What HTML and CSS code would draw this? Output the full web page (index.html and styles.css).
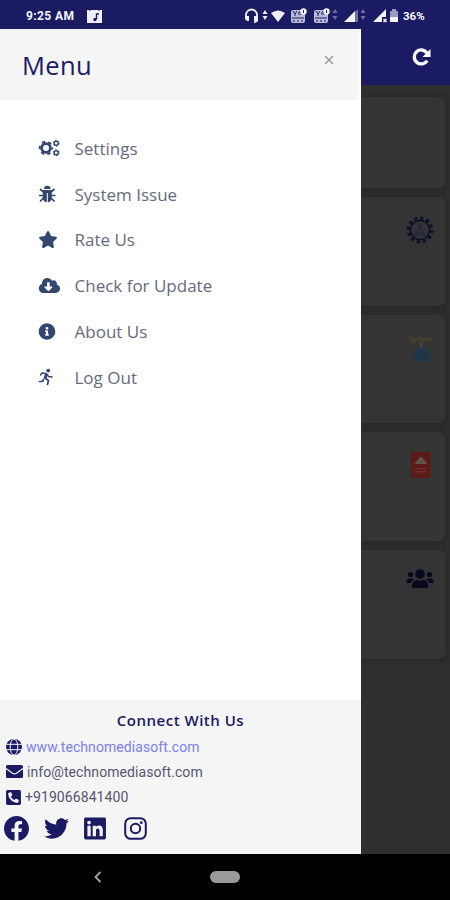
FILE: index.html
```html
<!DOCTYPE html>
<html lang="en">
<head>
    <meta charset="UTF-8">
    <meta name="viewport" content="width=device-width, initial-scale=1.0">
    <title>Menu</title>
    <link rel="stylesheet" href="styles.css">
</head>
<body>
    <div class="phone">
        <div class="status-bar">
            <span class="time">9:25 AM</span>
            <svg class="note" width="15" height="14" viewBox="0 0 15 14"><path fill="#eeeef8" d="M0 1h2l1 1 1-1h7l1 1 1-1h2v13H0z"/><path fill="none" stroke="#1a1b62" stroke-width="1.4" d="M12 5H9.500v5"/><circle cx="8" cy="10.500" r="1.700" fill="#1a1b62"/></svg>
            <svg class="status-icons" width="156" height="18" viewBox="244 6 156 18">
                <path fill="none" stroke="#f0f0fa" stroke-width="1.800" d="M246 17v-3a5.500 5.500 0 0 1 11 0v6l-3 1.500"/>
                <path fill="#f0f0fa" d="M245 15h4v5h-2l-2-2zM254 15h4v4l-1 1h-3zM265 9l2.500 4h-5zM265 19l2.500-4h-5zM271 12q7-5 14 0l-7 9z"/>
                <g fill="#b9b9da"><rect x="291" y="9" width="14" height="13" rx="2"/><rect x="314" y="9" width="14" height="13" rx="2"/></g>
                <g fill="none" stroke="#1a1b62" stroke-width="1"><path d="M293 10l2 3 2-3M295 13v2M299 14v-3h2v3M292 17h12M294 19v2M298 19v2M302 19v2M316 10l2 3 2-3M318 13v2M322 14v-3h2v3M315 17h12M317 19v2M321 19v2M325 19v2"/></g>
                <g fill="#f5f5fc"><circle cx="303.500" cy="10.500" r="3.200"/><circle cx="326.500" cy="10.500" r="3.200"/></g>
                <path stroke="#1a1b62" d="M303.500 9v3M326.500 9v3"/>
                <path fill="#6e6fa6" d="M335 8l2.500 4h-5zM335 19l2.500-4h-5zM363 8l2.500 4h-5zM363 19l2.500-4h-5zM355 11l3-3v13h-3z"/>
                <path fill="#f5f5fc" d="M344 21l11-11v11zM373 21l13-13v8h-4v5z"/>
                <path stroke="#f5f5fc" stroke-width="1.500" d="M383.500 18l3 3M386.500 18l-3 3"/>
                <path fill="#9899c4" d="M392 8h4v2h2v6h-8v-6h2z"/><path fill="#f5f5fc" d="M390 16h8v5h-8z"/>
            </svg>
            <span class="battery">36%</span>
        </div>

        <div class="screen">
            <div class="page">
                <div class="app-bar">
                    <svg width="20" height="20" viewBox="0 0 20 20"><path fill="none" stroke="#fff" stroke-width="3.300" d="M15.200 13.600A7 7 0 1 1 15 6"/><path fill="#fff" d="M18.500 2v8h-8z"/></svg>
                </div>
                <div class="cards">
                    <div class="card card-first"></div>
                    <div class="card">
                        <svg width="28" height="28" viewBox="0 0 28 28"><circle cx="14" cy="14" r="11.800" fill="none" stroke="#0b0f2c" stroke-width="3.200" stroke-dasharray="3.090 3.090"/><circle cx="14" cy="14" r="9.600" fill="none" stroke="#0b0f2c" stroke-width="1.500"/><path fill="none" stroke="#242736" stroke-width="1.300" d="M9 19l5-8 5 8zM11 17h6"/><circle cx="14" cy="10" r="2" fill="none" stroke="#242736" stroke-width="1.200"/></svg>
                    </div>
                    <div class="card">
                        <svg width="28" height="28" viewBox="0 0 28 28"><path fill="#453e2f" d="M2 3l8 1 5-2 3 2 7-1 2 4-6-1-3 3-2-2-2 3-2-3-6 3z"/><path fill="#514739" d="M14 8h2v6h-2z"/><path fill="#203549" d="M6 27l3-8q2-5 6.500-6 4.500 1 6.500 6l4 8z"/></svg>
                    </div>
                    <div class="card">
                        <svg width="28" height="28" viewBox="0 0 28 28"><path fill="#5c1a16" d="M5 1h19.500v26H5z"/><path fill="#62534f" d="M8.500 13l3-4 3-3.500 3 2.500 4 5z"/><path fill="#6a312c" d="M9 17h11v1.500H9zM9 20h12v1.500H9z"/></svg>
                    </div>
                    <div class="card card-users">
                        <svg width="28" height="28" viewBox="0 0 28 28"><g fill="#07081e"><circle cx="14" cy="9" r="4.800"/><circle cx="4.500" cy="9.500" r="2.600"/><circle cx="23.500" cy="9.500" r="2.600"/><path d="M6 23v-2c0-4 3-6 5-6q3 1.500 6 0c3 0 5 2 5 6v2zM.5 18c0-3 1-4.500 3-4.500h3l1 1q-2 1.500-2.500 3.500zM27.500 18c0-3-1-4.500-3-4.500h-3l-1 1q2 1.500 2.500 3.500z"/></g></svg>
                    </div>
                </div>
            </div>

            <div class="drawer">
                <div class="drawer-header">
                    <h1>Menu</h1>
                    <svg class="close" width="10" height="10" viewBox="0 0 10 10"><path stroke="#999" stroke-width="1.500" d="M1 1l8 8M9 1L1 9"/></svg>
                </div>
                <ul class="menu">
                    <li>
                        <svg width="22" height="18" viewBox="0 0 22 18"><g fill="none"><circle cx="8" cy="9" r="4.400" stroke-width="2.800"/><circle cx="8" cy="9" r="6.300" stroke-width="1.900" stroke-dasharray="3.200 3.400" stroke-dashoffset="1.600"/><circle cx="18.200" cy="4.200" r="2" stroke-width="1.400"/><circle cx="18.200" cy="4.200" r="3" stroke-width="1" stroke-dasharray="1.600 1.540"/><circle cx="18.200" cy="13.800" r="2" stroke-width="1.400"/><circle cx="18.200" cy="13.800" r="3" stroke-width="1" stroke-dasharray="1.600 1.540"/></g></svg>
                        <span>Settings</span>
                    </li>
                    <li>
                        <svg width="18" height="18" viewBox="0 0 18 18"><path stroke="none" d="M6 4a3.300 3.300 0 0 1 6.600 0zM4.800 5h9v8q-.5 4-4 4.300V8h-1v9.300q-3.500-.3-4-4.300z"/><path fill="none" stroke-width="1.700" d="M2 4l3.500 3M16.500 4L13 7M1 10.500h4M17.500 10.500h-4M2 16.500L5.500 13M16.500 16.500L13 13"/></svg>
                        <span>System Issue</span>
                    </li>
                    <li>
                        <svg width="20" height="17" viewBox="0 0 576 512"><path stroke="none" d="M259.300 17.800L194 150.200 47.900 171.500c-26.200 3.800-36.700 36.100-17.700 54.600l105.700 103-25 145.500c-4.500 26.300 23.200 46 46.400 33.700L288 439.600l130.700 68.700c23.200 12.200 50.900-7.400 46.400-33.700l-25-145.500 105.700-103c19-18.500 8.500-50.800-17.700-54.600L382 150.200 316.700 17.800c-11.700-23.600-45.600-23.900-57.400 0z"/></svg>
                        <span>Rate Us</span>
                    </li>
                    <li>
                        <svg width="22" height="17" viewBox="-14 0 640 512"><path stroke="none" d="M537.600 226.600c4.100-10.700 6.400-22.400 6.400-34.600 0-53-43-96-96-96-19.700 0-38.100 6-53.300 16.200C367 64.200 315.300 32 256 32c-88.400 0-160 71.600-160 160 0 2.700.1 5.400.2 8.100C40.200 219.800 0 273.200 0 336c0 79.500 64.500 144 144 144h368c70.700 0 128-57.300 128-128 0-61.900-44-113.600-102.400-125.400zm-132.900 88.700L299.300 420.700c-6.200 6.200-16.400 6.200-22.600 0L171.300 315.300c-10.100-10.100-2.900-27.300 11.300-27.300H248V176c0-8.800 7.200-16 16-16h48c8.800 0 16 7.200 16 16v112h65.400c14.200 0 21.400 17.200 11.300 27.300z"/></svg>
                        <span>Check for Update</span>
                    </li>
                    <li>
                        <svg width="18" height="17" viewBox="0 0 512 512"><path stroke="none" d="M256 8C119 8 8 119 8 256s111 248 248 248 248-111 248-248S393 8 256 8zm0 110c23.200 0 42 18.800 42 42s-18.800 42-42 42-42-18.800-42-42 18.800-42 42-42zm56 254c0 6.600-5.400 12-12 12h-88c-6.600 0-12-5.400-12-12v-24c0-6.600 5.400-12 12-12h12v-64h-12c-6.600 0-12-5.400-12-12v-24c0-6.600 5.400-12 12-12h64c6.600 0 12 5.400 12 12v100h12c6.600 0 12 5.400 12 12v24z"/></svg>
                        <span>About Us</span>
                    </li>
                    <li>
                        <svg width="16" height="18" viewBox="0 0 16 18"><circle cx="10.200" cy="2.600" r="1.900" stroke="none"/><path fill="none" stroke-width="1.500" stroke-linejoin="round" stroke-linecap="round" d="M2.500 7l1.500-2 4 .5 2.500 3L14 9"/><path fill="none" stroke-width="2.800" d="M8.500 5.500l-1.500 5"/><path fill="none" stroke-width="1.700" stroke-linecap="round" stroke-linejoin="round" d="M7 10l3.500 2.500-1 4M5.500 11.500L4.500 13.500H1.500"/></svg>
                        <span>Log Out</span>
                    </li>
                </ul>

                <div class="connect">
                    <h2>Connect With Us</h2>
                    <div class="contact">
                        <svg width="16" height="16" viewBox="0 0 16 16"><circle cx="8" cy="8" r="8"/><g fill="none" stroke="#f5f5f5" stroke-width="1"><ellipse cx="8" cy="8" rx="3.800" ry="8"/><path d="M0 5.300h16M0 10.700h16"/></g></svg>
                        <a class="link">www.technomediasoft.com</a>
                    </div>
                    <div class="contact">
                        <svg width="17" height="16" viewBox="0 0 17 16"><rect y="1" width="17" height="13" rx="1.500"/><path fill="none" stroke="#f5f5f5" stroke-width="1.300" d="M0 4.500l6.500 4.700q2 1.200 4 0L17 4.500"/></svg>
                        <span>info@technomediasoft.com</span>
                    </div>
                    <div class="contact">
                        <svg width="15" height="17" viewBox="0 0 448 512"><path d="M48 32h352a48 48 0 0 1 48 48v352a48 48 0 0 1-48 48H48a48 48 0 0 1-48-48V80a48 48 0 0 1 48-48z"/><path fill="#f5f5f5" d="M354 416c7 0 13-4.900 14.600-11.600l15-65a15 15 0 0 0-8.700-17.200l-70-30a15 15 0 0 0-17.500 4.300l-31 37.900c-48.900-23-88.300-62.900-110.800-110.800l37.900-31a15 15 0 0 0 4.300-17.500l-30-70a15 15 0 0 0-17.200-8.700l-65 15A15 15 0 0 0 64 126c0 160.300 129.900 290 290 290z"/></svg>
                        <span>+919066841400</span>
                    </div>
                    <div class="social">
                        <svg width="25" height="25" viewBox="8 8 496 496"><path d="M504 256C504 119 393 8 256 8S8 119 8 256c0 123.780 90.690 226.380 209.250 245V327.690h-63V256h63v-54.640c0-62.150 37-96.480 93.670-96.480 27.140 0 55.520 4.840 55.520 4.840v61h-31.280c-30.800 0-40.410 19.120-40.410 38.730V256h68.780l-11 71.690h-57.780V501C413.310 482.380 504 379.780 504 256z"/></svg>
                        <svg width="25" height="25" viewBox="0 0 512 512"><path d="M459.370 151.716c.325 4.548.325 9.097.325 13.645 0 138.720-105.583 298.558-298.558 298.558-59.452 0-114.680-17.219-161.137-47.106 8.447.974 16.568 1.299 25.340 1.299 49.055 0 94.213-16.568 130.274-44.832-46.132-.975-84.792-31.188-98.112-72.772 6.498.974 12.995 1.624 19.818 1.624 9.421 0 18.843-1.300 27.614-3.573-48.081-9.747-84.143-51.980-84.143-102.985v-1.299c13.969 7.797 30.214 12.670 47.431 13.319-28.264-18.843-46.781-51.005-46.781-87.391 0-19.492 5.197-37.360 14.294-52.954 51.655 63.675 129.300 105.258 216.365 109.807-1.624-7.797-2.599-15.918-2.599-24.040 0-57.828 46.782-104.934 104.934-104.934 30.213 0 57.502 12.670 76.670 33.137 23.715-4.548 46.456-13.320 66.599-25.340-7.798 24.366-24.366 44.833-46.132 57.827 21.117-2.273 41.584-8.122 60.426-16.243-14.292 20.791-32.161 39.308-52.628 54.253z"/></svg>
                        <svg width="22" height="25" viewBox="0 0 448 512"><path d="M416 32H31.900C14.300 32 0 46.500 0 64.300v383.400C0 465.500 14.300 480 31.900 480H416c17.600 0 32-14.500 32-32.300V64.300c0-17.800-14.400-32.300-32-32.300zM135.400 416H69V202.200h66.500V416zm-33.200-243c-21.300 0-38.500-17.300-38.500-38.500S80.900 96 102.200 96c21.200 0 38.500 17.300 38.500 38.500 0 21.300-17.200 38.500-38.500 38.500zm282.100 243h-66.400V312c0-24.800-.5-56.700-34.500-56.700-34.600 0-39.900 27-39.900 54.900V416h-66.400V202.200h63.700v29.200h.9c8.900-16.800 30.600-34.500 62.900-34.500 67.200 0 79.700 44.300 79.700 101.900V416z"/></svg>
                        <svg class="instagram" width="23" height="25" viewBox="0 0 23 25"><g fill="none" stroke="#1a1b62" stroke-width="2"><rect x="1.200" y="2.200" width="20.600" height="20.600" rx="5.500"/><circle cx="11.500" cy="12.500" r="4.700"/></g><circle cx="17.300" cy="6.700" r="1.400"/></svg>
                    </div>
                </div>
            </div>
        </div>

        <div class="nav-bar">
            <svg width="8" height="12" viewBox="0 0 8 12"><path fill="none" stroke="#a8a8a8" stroke-width="1.800" d="M6.500 1L1.500 6l5 5"/></svg>
            <div class="home-pill"></div>
        </div>
    </div>
</body>
</html>
```
FILE: styles.css
```css
:root {
    --navy: #1a1b62;
    --panel: #f5f5f5;
    --page: #2f2f2f;
    --card: #343435;
    --icon: #34466f;
}

* {
    box-sizing: border-box;
}

body {
    margin: 0;
    font-family: "Open Sans", sans-serif;
    color: var(--navy);
}

svg {
    display: block;
    flex-shrink: 0;
}

.phone {
    display: flex;
    flex-direction: column;
    width: 450px;
    height: 900px;
    overflow: hidden;
}

.status-bar {
    display: flex;
    align-items: center;
    height: 29px;
    padding: 2px 24px 0 26px;
    background: var(--navy);
    color: #f5f5fc;
    font: bold 12px Roboto, sans-serif;
}

.time {
    width: 61px;
    letter-spacing: 0.4px;
}

.status-icons {
    margin-left: auto;
    margin-right: 3px;
}

.battery {
    width: 23px;
    font-size: 11.5px;
}

.screen {
    position: relative;
    flex: 1;
}

.page {
    height: 100%;
    background: var(--page);
}

.app-bar {
    display: flex;
    align-items: center;
    justify-content: flex-end;
    height: 56px;
    padding-right: 18px;
    background: var(--navy);
}

.cards {
    display: flex;
    flex-direction: column;
    gap: 9px;
    padding: 12px 5px 0;
}

.card {
    display: flex;
    justify-content: flex-end;
    height: 108.7px;
    padding: 19px 11px;
    border-radius: 6px;
    background: var(--card);
    box-shadow: 0 1px 5px 2px #282828;
}

.card-first {
    height: 91px;
}

.card-users {
    padding-top: 15px;
}

.drawer {
    position: absolute;
    top: 0;
    left: 0;
    display: flex;
    flex-direction: column;
    width: 361px;
    height: 100%;
    background: #fff;
}

.drawer-header {
    display: flex;
    align-items: center;
    justify-content: space-between;
    height: 71px;
    margin-right: 2px;
    padding: 0 25px 0 22px;
    background: var(--panel);
}

.drawer-header h1 {
    margin: 0;
    font-size: 25.5px;
    font-weight: 400;
    letter-spacing: 0.4px;
}

.close {
    margin-top: -9px;
}

.menu {
    flex: 1;
    margin: 0;
    padding: 25.5px 0 0 38px;
    list-style: none;
}

.menu li {
    display: grid;
    grid-template-columns: 36.5px 1fr;
    align-items: center;
    height: 45.8px;
    color: #666a7c;
    font-size: 17px;
}

.menu svg {
    fill: var(--icon);
    stroke: var(--icon);
}

.connect {
    height: 154px;
    padding: 9px 4px 0;
    background: var(--panel);
}

.connect h2 {
    margin: 0 0 3px;
    font-size: 15px;
    font-weight: 600;
    line-height: 22px;
    letter-spacing: 0.5px;
    text-align: center;
}

.connect svg {
    fill: var(--navy);
}

.contact {
    display: flex;
    align-items: center;
    gap: 4px;
    height: 25.3px;
    padding-left: 2px;
    color: #55566f;
    font: 14px Roboto, sans-serif;
    letter-spacing: 0.08px;
}

.link {
    color: #7a80ec;
}

.social {
    display: flex;
    gap: 15px;
    padding-top: 6px;
}

.instagram {
    margin-left: 3px;
}

.nav-bar {
    display: flex;
    align-items: center;
    height: 46px;
    padding-left: 94px;
    background: #000;
}

.home-pill {
    width: 30px;
    height: 12px;
    margin-left: 108px;
    border-radius: 6px;
    background: #999;
}
```
